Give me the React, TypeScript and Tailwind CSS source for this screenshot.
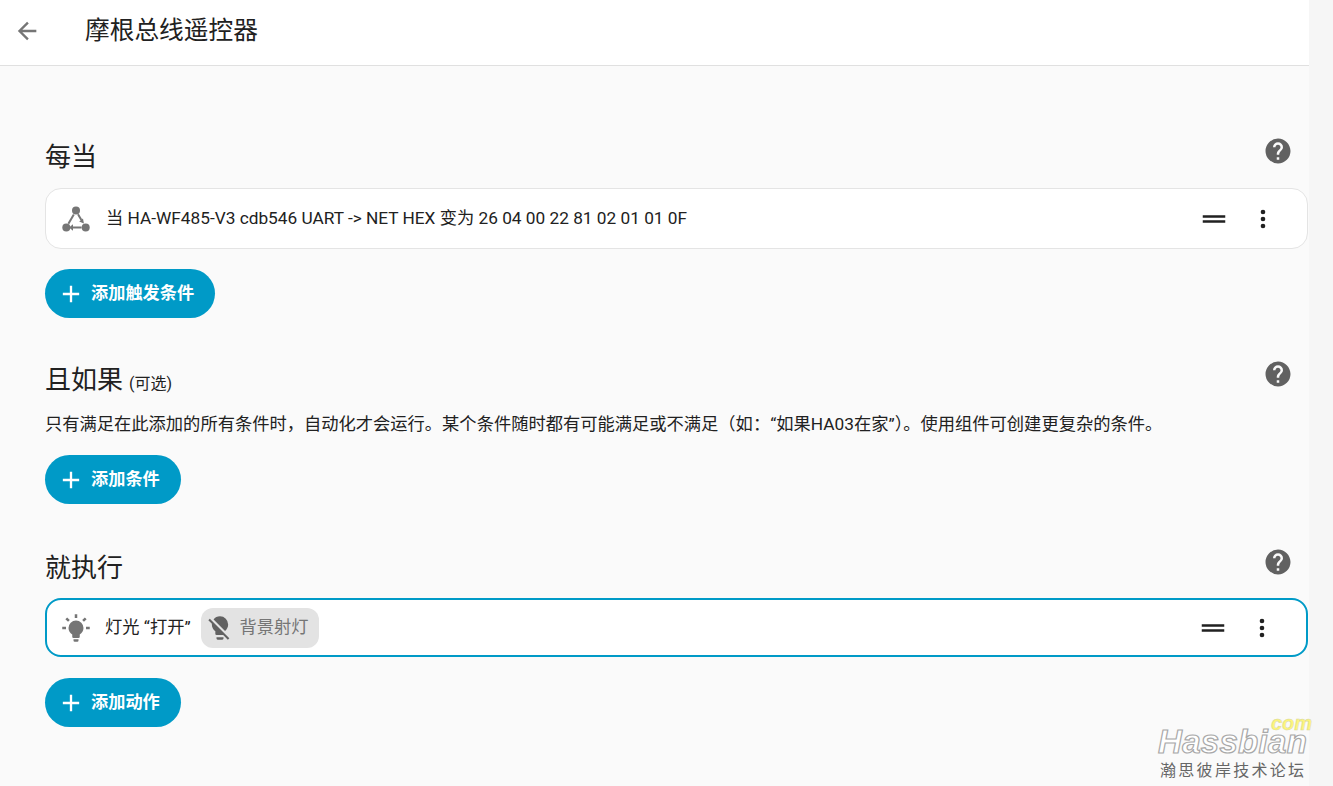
const cjk = "font-['Roboto','Noto_Sans_CJK_SC',sans-serif]";

const paths = {
  back: "M20,11V13H8L13.5,18.5L12.08,19.92L4.16,12L12.08,4.08L13.5,5.5L8,11H20Z",
  help: "M15.07,11.25L14.17,12.17C13.45,12.89 13,13.5 13,15H11V14.5C11,13.39 11.45,12.39 12.17,11.67L13.41,10.41C13.78,10.05 14,9.55 14,9C14,7.89 13.1,7 12,7A2,2 0 0,0 10,9H8A4,4 0 0,1 12,5A4,4 0 0,1 16,9C16,9.88 15.64,10.67 15.07,11.25M13,19H11V17H13M12,2A10,10 0 0,0 2,12A10,10 0 0,0 12,22A10,10 0 0,0 22,12C22,6.47 17.5,2 12,2Z",
  dots: "M12,16A2,2 0 0,1 14,18A2,2 0 0,1 12,20A2,2 0 0,1 10,18A2,2 0 0,1 12,16M12,10A2,2 0 0,1 14,12A2,2 0 0,1 12,14A2,2 0 0,1 10,12A2,2 0 0,1 12,10M12,4A2,2 0 0,1 14,6A2,2 0 0,1 12,8A2,2 0 0,1 10,6A2,2 0 0,1 12,4Z",
  drag: "M21 11H3V9H21V11M21 13H3V15H21V13Z",
  plus: "M19,13H13V19H11V13H5V11H11V5H13V11H19V13Z",
  bulb: "M12,6A6,6 0 0,1 18,12C18,14.22 16.79,16.16 15,17.2V19A1,1 0 0,1 14,20H10A1,1 0 0,1 9,19V17.2C7.21,16.16 6,14.22 6,12A6,6 0 0,1 12,6M14,21V22A1,1 0 0,1 13,23H11A1,1 0 0,1 10,22V21H14M20,11H23V13H20V11M1,11H4V13H1V11M13,1V4H11V1H13M4.92,3.5L7.05,5.64L5.63,7.05L3.5,4.93L4.92,3.5M16.95,5.63L19.07,3.5L20.5,4.93L18.37,7.05L16.95,5.63Z",
  bulbOff: "M12,2C9.76,2 7.78,3.05 6.5,4.68L16.31,14.5C17.94,13.21 19,11.24 19,9A7,7 0 0,0 12,2M3.28,4L2,5.27L5.04,8.3C5,8.53 5,8.76 5,9C5,11.38 6.19,13.47 8,14.74V17A1,1 0 0,0 9,18H14.73L18.73,22L20,20.72L3.28,4M9,20V21A1,1 0 0,0 10,22H14A1,1 0 0,0 15,21V20H9Z",
};

function Icon({ d, className }: { d: string; className: string }) {
  return (
    <svg viewBox="0 0 24 24" className={className} fill="currentColor">
      <path d={d} />
    </svg>
  );
}

// three nodes joined by arrows, the trigger row icon
function TriggerIcon() {
  return (
    <svg viewBox="0 0 30 30" className="w-[30px] h-[30px] text-[#757575]" fill="currentColor">
      <circle cx="15" cy="6.5" r="4" />
      <circle cx="5.3" cy="23.5" r="4" />
      <circle cx="24.7" cy="23.5" r="4" />
      <path d="M12.8 10.5 L7.4 19.8" stroke="currentColor" strokeWidth="2" fill="none" />
      <path d="M17 10.2 L20.4 16" stroke="currentColor" strokeWidth="2" fill="none" />
      <path d="M10 23.5 L20.6 23.5" stroke="currentColor" strokeWidth="2" fill="none" />
      <path d="M22.9 19.4 L18.2 17.4 L22 14.6 Z" />
      <path d="M12 20.3 L12 26.7 L8 23.5 Z" />
    </svg>
  );
}

function SectionTitle({ title, note }: { title: string; note?: string }) {
  return (
    <div className="flex justify-between pr-[15px] h-[50px]">
      <h2 className="text-[26px] leading-[54px] text-[#212121]">
        {title}
        {note && <span className="text-[16px] ml-[6px]">{note}</span>}
      </h2>
      <Icon d={paths.help} className="w-[30px] h-[30px] mt-[6px] text-[#616161]" />
    </div>
  );
}

function Row({ active, icon, children }: { active?: boolean; icon: React.ReactNode; children: React.ReactNode }) {
  return (
    <div
      className={
        active
          ? "flex items-center h-[59px] bg-white rounded-[16px] border-2 border-[#009ac7] pl-[14px]"
          : "flex items-center h-[61px] bg-white rounded-[16px] border border-[#e4e4e4] pl-[15px]"
      }
    >
      <div className="w-[30px] flex justify-center shrink-0">{icon}</div>
      <div className="flex items-center flex-1 ml-[15px] text-[17.25px] text-[#212121]">{children}</div>
      <Icon d={paths.drag} className="w-[30px] h-[30px] text-[#212121] mr-[20px]" />
      <Icon d={paths.dots} className="w-[28px] h-[28px] text-[#212121] mr-[30px]" />
    </div>
  );
}

function AddButton({ label }: { label: string }) {
  return (
    <button className="flex items-center h-[49px] pl-[12px] pr-[21px] rounded-full bg-[#009ac7] text-white text-[17.2px] font-semibold">
      <Icon d={paths.plus} className="w-[28px] h-[28px] mr-[6px]" />
      {label}
    </button>
  );
}

export default function App() {
  return (
    <div className={`relative flex h-[786px] overflow-hidden bg-[#f6f6f6] ${cjk}`}>
      <div className="w-[1309px] shrink-0 bg-[#fafafa]">
        <header className="flex items-center h-[66px] bg-white border-b border-[#e0e0e0]">
          <Icon d={paths.back} className="w-[28px] h-[28px] ml-[13px] mt-[-4px] text-[#757575]" />
          <h1 className="ml-[44px] mt-[-4px] text-[24.7px] text-[#212121]">摩根总线遥控器</h1>
        </header>

        <main className="pl-[45px] pr-[1px]">
          <section className="pt-[64px]">
            <SectionTitle title="每当" />
            <div className="mt-[8px]">
              <Row icon={<TriggerIcon />}>当 HA-WF485-V3 cdb546 UART -&gt; NET HEX 变为 26 04 00 22 81 02 01 01 0F</Row>
            </div>
            <div className="mt-[20px] flex">
              <AddButton label="添加触发条件" />
            </div>
          </section>

          <section className="pt-[35px]">
            <SectionTitle title="且如果" note="(可选)" />
            <p className="mt-[9px] text-[17.28px] leading-[24px] text-[#212121]">
              只有满足在此添加的所有条件时，自动化才会运行。某个条件随时都有可能满足或不满足（如：“如果HA03在家”）。使用组件可创建更复杂的条件。
            </p>
            <div className="mt-[19px] flex">
              <AddButton label="添加条件" />
            </div>
          </section>

          <section className="pt-[37px]">
            <SectionTitle title="就执行" />
            <div className="mt-[7px]">
              <Row active icon={<Icon d={paths.bulb} className="w-[30px] h-[30px] text-[#757575]" />}>
                <span className="-ml-[1px] mt-[1px]">灯光 “打开”</span>
                <span className="flex items-center h-[40px] ml-[10px] pl-[5px] pr-[10px] rounded-[12px] bg-[#e3e3e3] text-[#757575]">
                  <Icon d={paths.bulbOff} className="w-[28px] h-[28px] text-[#616161] mr-[6px]" />
                  背景射灯
                </span>
              </Row>
            </div>
            <div className="mt-[21px] flex">
              <AddButton label="添加动作" />
            </div>
          </section>
        </main>
      </div>

      {/* forum watermark over the corner */}
      <div className="absolute left-[1158px] top-[714px] w-[160px] pointer-events-none font-['Liberation_Sans',sans-serif]">
        <div className="absolute left-[113px] top-[2px] text-[20px] leading-[15px] font-bold italic text-[#fdf57a] [-webkit-text-stroke:0.5px_#d8d8a0]">com</div>
        <div className="pt-[17px] text-[33px] leading-[22px] font-bold italic text-white [-webkit-text-stroke:1.2px_#a8a8a8] tracking-[0.3px]">Hassbian</div>
        <div className={`ml-[2px] mt-[7px] text-[16px] leading-[22px] tracking-[2.3px] text-[#666666] whitespace-nowrap ${cjk}`}>瀚思彼岸技术论坛</div>
      </div>
    </div>
  );
}
